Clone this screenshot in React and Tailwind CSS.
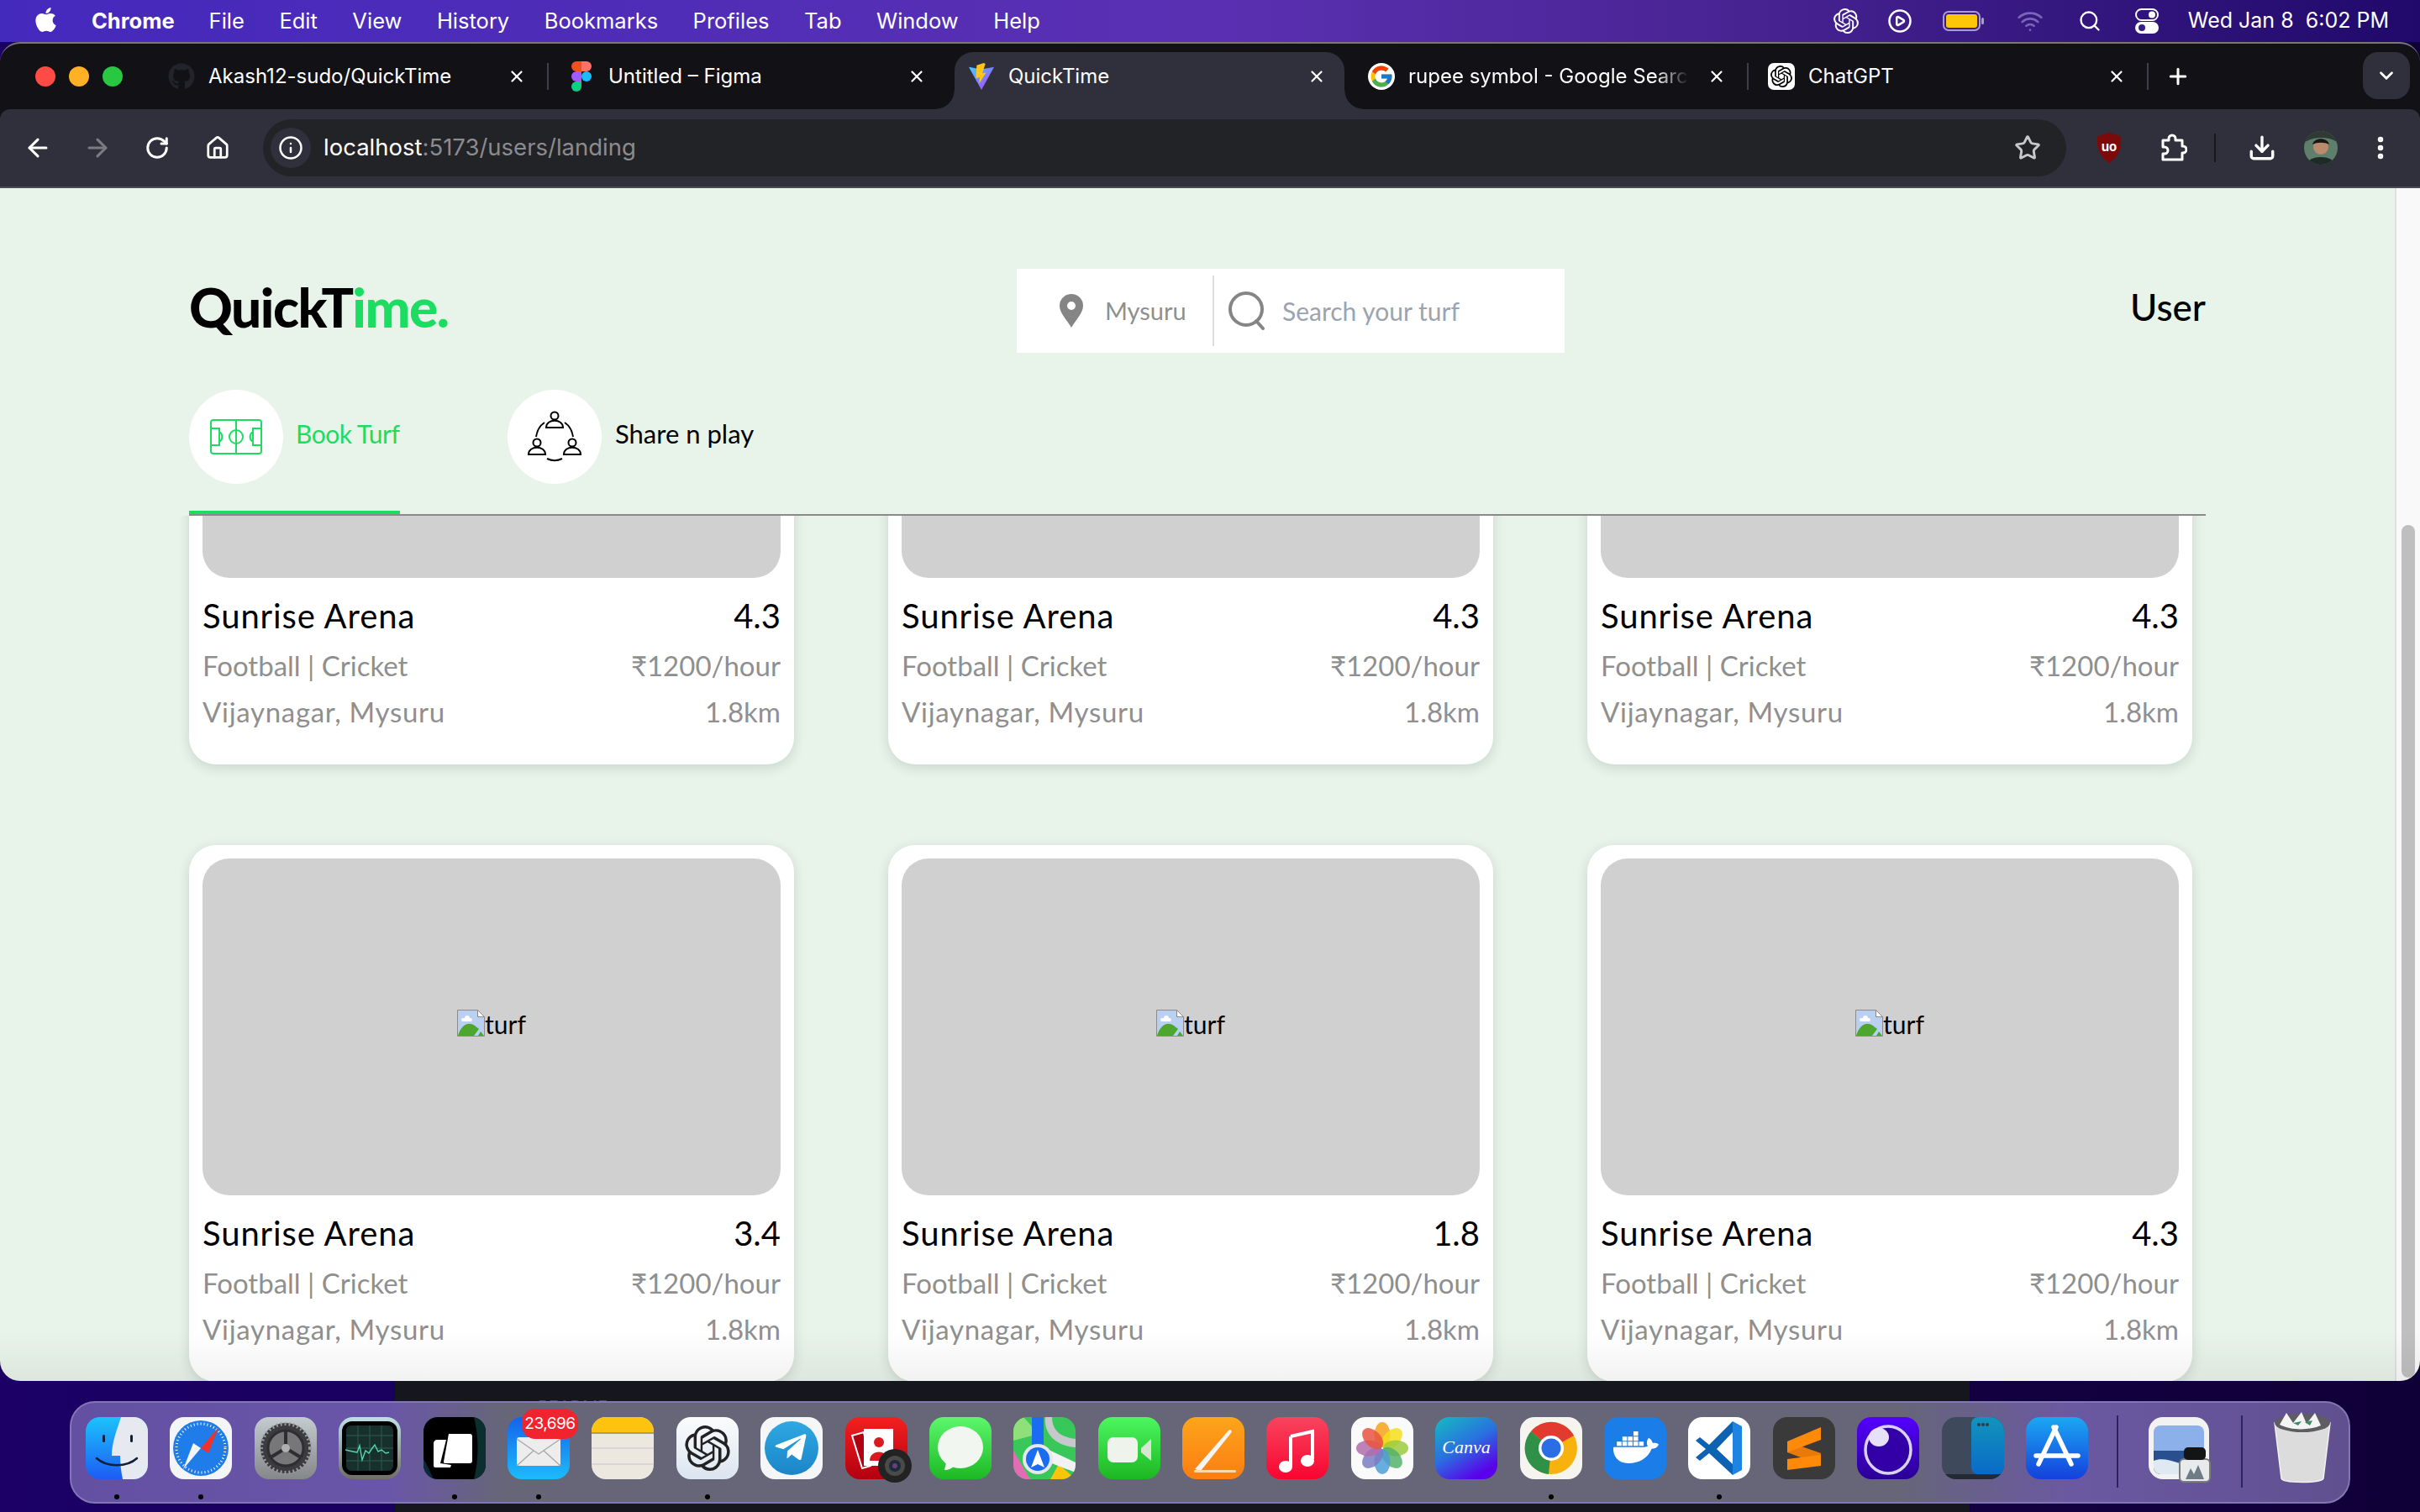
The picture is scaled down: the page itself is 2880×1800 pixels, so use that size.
import {
  ArrowLeft,
  ArrowRight,
  ChevronDown,
  CirclePlay,
  Download,
  EllipsisVertical,
  House,
  Info,
  Plus,
  RotateCw,
  Search,
  Star,
  Wifi,
  X,
} from "lucide-react";
import { FaApple, FaDocker, FaGithub, FaTelegramPlane } from "react-icons/fa";
import { FcGoogle } from "react-icons/fc";
import { SiOpenai } from "react-icons/si";

const MENU_ITEMS = ["File", "Edit", "View", "History", "Bookmarks", "Profiles", "Tab", "Window", "Help"];

const FigmaIcon = () => (
  <svg width="24" height="36" viewBox="0 0 24 36">
    <path d="M12 0H6a6 6 0 0 0 0 12h6z" fill="#f24e1e" />
    <path d="M12 0h6a6 6 0 0 1 0 12h-6z" fill="#ff7262" />
    <path d="M12 12H6a6 6 0 0 0 0 12h6z" fill="#a259ff" />
    <circle cx="18" cy="18" r="6" fill="#1abcfe" />
    <path d="M6 24h6v6a6 6 0 1 1-6-6z" fill="#0acf83" />
  </svg>
);

const ViteIcon = () => (
  <svg width="34" height="34" viewBox="0 0 34 34">
    <defs>
      <linearGradient id="viteBody" x1="0" y1="0" x2="1" y2="1">
        <stop offset="0" stopColor="#41d1ff" />
        <stop offset="1" stopColor="#bd34fe" />
      </linearGradient>
    </defs>
    <path d="M1 5l16 3 16-3-16 29z" fill="url(#viteBody)" />
    <path d="M20 0l-9 3-1 16 5-1-1 8 9-14-5 1 4-12z" fill="#ffc517" />
  </svg>
);

const ChatTabIcon = () => (
  <div className="w-[32px] h-[32px] rounded-[7px] bg-white flex items-center justify-center text-black">
    <SiOpenai size={26} />
  </div>
);

const TABS = [
  { id: 1, title: "Akash12-sudo/QuickTime", icon: <FaGithub size={32} className="text-[#22242a]" />, sep: true },
  { id: 2, title: "Untitled – Figma", icon: <FigmaIcon /> },
  { id: 3, title: "QuickTime", icon: <ViteIcon />, active: true },
  { id: 4, title: "rupee symbol - Google Search", icon: <FcGoogle size={32} className="bg-white rounded-full p-[1px]" />, sep: true, fade: true },
  { id: 5, title: "ChatGPT", icon: <ChatTabIcon />, sep: true },
];

const CARDS = ["4.3", "4.3", "4.3", "3.4", "1.8", "4.3"];

const MenuBar = () => (
  <div className="h-[50px] shrink-0 flex items-center pl-[38px] pr-[37px] text-white text-[25.5px] bg-[linear-gradient(90deg,#4429bd_0%,#5a30b2_50%,#4a2595_70%,#20096b_100%)]">
    <FaApple size={33} className="mr-[38px] -mt-[4px]" />
    <span className="font-bold mr-[41px]">Chrome</span>
    <div className="flex gap-[41.5px]">
      {MENU_ITEMS.map((item) => (
        <span key={item}>{item}</span>
      ))}
    </div>
    <div className="ml-auto flex items-center text-[25px]">
      <SiOpenai size={30} />
      <CirclePlay size={30} className="ml-[34px]" />
      <svg width="50" height="24" viewBox="0 0 50 24" className="ml-[36px]">
        <rect x="1" y="1" width="43" height="22" rx="6" fill="none" stroke="#a99bd8" strokeWidth="2" />
        <rect x="4" y="4" width="37" height="16" rx="3" fill="#fdc609" />
        <rect x="46" y="8" width="3" height="8" rx="1.5" fill="#a99bd8" />
      </svg>
      <Wifi size={32} className="ml-[38px] text-[#7a66b4]" />
      <Search size={28} className="ml-[41px]" />
      <svg width="28" height="30" viewBox="0 0 28 30" className="ml-[40px]">
        <rect x="1" y="1" width="26" height="13" rx="6.5" fill="none" stroke="#fff" strokeWidth="2" />
        <circle cx="20" cy="7.5" r="4" fill="#fff" />
        <rect x="0" y="16" width="28" height="14" rx="7" fill="#fff" />
        <circle cx="8" cy="23" r="4" fill="#3b1a8a" />
      </svg>
      <span className="ml-[35px] whitespace-pre">Wed Jan 8  6:02 PM</span>
    </div>
  </div>
);

const TabItem = ({ tab }) => (
  <div className="relative w-[476px] h-full flex items-center">
    {tab.active && (
      <>
        <div className="absolute left-0 top-[10px] bottom-0 w-[464px] bg-[#30303c] rounded-t-[22px]" />
        <div className="absolute left-[-22px] bottom-0 w-[22px] h-[22px] bg-[radial-gradient(circle_at_0_0,transparent_21px,#30303c_22px)]" />
        <div className="absolute left-[464px] bottom-0 w-[22px] h-[22px] bg-[radial-gradient(circle_at_100%_0,transparent_21px,#30303c_22px)]" />
      </>
    )}
    <div className="relative w-full flex items-center pl-[16px] pr-[34px] text-white text-[24px]">
      <div className="w-[32px] h-[36px] flex items-center justify-center shrink-0">{tab.icon}</div>
      <span
        className={
          tab.fade
            ? "ml-[16px] w-[334px] overflow-hidden whitespace-nowrap [mask-image:linear-gradient(90deg,#000_88%,transparent)]"
            : "ml-[16px] whitespace-nowrap"
        }
      >
        {tab.title}
      </span>
      <X size={22} strokeWidth={2.4} className="ml-auto" />
    </div>
    {tab.sep && <div className="absolute right-[7px] top-[23px] h-[32px] w-[2px] bg-[#3f3f4a]" />}
  </div>
);

const TabStrip = () => (
  <div className="h-[78px] flex items-center relative">
    <div className="w-[184px] h-full flex items-center pl-[42px] gap-[16px]">
      <span className="w-[24px] h-[24px] rounded-full bg-[#ff4b45]" />
      <span className="w-[24px] h-[24px] rounded-full bg-[#ffb024]" />
      <span className="w-[24px] h-[24px] rounded-full bg-[#28c840]" />
    </div>
    {TABS.map((tab) => (
      <TabItem key={tab.id} tab={tab} />
    ))}
    <Plus size={30} strokeWidth={2.4} className="text-white ml-[13px]" />
    <div className="ml-auto mr-[12px] -mt-[2px] w-[56px] h-[56px] rounded-[18px] bg-[#30303c] flex items-center justify-center">
      <ChevronDown size={26} strokeWidth={2.6} className="text-white" />
    </div>
  </div>
);

const Toolbar = () => (
  <div className="h-[94px] flex items-start pt-[12px] pl-[9px] bg-[#30303c] border-b-2 border-[#4a4a55] rounded-t-[12px] text-white">
    <div className="w-[71px] h-[68px] flex items-center justify-center">
      <ArrowLeft size={34} strokeWidth={2.2} />
    </div>
    <div className="w-[71px] h-[68px] flex items-center justify-center text-[#7b7b84]">
      <ArrowRight size={34} strokeWidth={2.2} />
    </div>
    <div className="w-[72px] h-[68px] flex items-center justify-center">
      <RotateCw size={30} strokeWidth={2.4} />
    </div>
    <div className="w-[72px] h-[68px] flex items-center justify-center">
      <House size={30} strokeWidth={2.2} />
    </div>
    <div className="ml-[18px] w-[2146px] h-[68px] rounded-full bg-[#222327] flex items-center pl-[9px] pr-[30px]">
      <div className="w-[48px] h-[48px] rounded-full bg-[#30303c] flex items-center justify-center">
        <Info size={30} strokeWidth={2} />
      </div>
      <span className="ml-[15px] text-[27.5px]">
        localhost<span className="text-[#8b8b90]">:5173/users/landing</span>
      </span>
      <Star size={32} strokeWidth={2.2} className="ml-auto text-[#c8c8cc]" />
    </div>
    <div className="h-[68px] flex items-center">
      <svg width="32" height="36" viewBox="0 0 32 36" className="ml-[35px]">
        <path d="M16 0l14 4c1 12-1 24-14 32C3 28 1 16 2 4z" fill="#7c0a0a" />
        <text x="16" y="22" textAnchor="middle" fontSize="15" fontWeight="700" fill="#fff" fontFamily="Inter, sans-serif">uo</text>
      </svg>
      <svg width="34" height="34" viewBox="0 0 34 34" fill="none" stroke="#fff" strokeWidth="3" strokeLinejoin="round" className="ml-[43px]">
        <path d="M5 8h7V6a4 4 0 0 1 8 0v2h8v7h1a4 4 0 0 1 0 8h-1v8H5v-7h2a4 4 0 0 0 0-8H5z" />
      </svg>
      <div className="ml-[32px] w-[2px] h-[34px] bg-[#17171c]" />
      <Download size={34} strokeWidth={2.4} className="ml-[38px]" />
      <svg width="40" height="40" viewBox="0 0 40 40" className="ml-[33px] rounded-full">
        <rect width="40" height="40" fill="#5f7f6d" />
        <path d="M0 0h40v14c-8-8-30-8-40 0z" fill="#2e3a33" />
        <circle cx="20" cy="19" r="9" fill="#b98a6c" />
        <path d="M10 16c2-9 18-9 20 0-6-3-14-3-20 0z" fill="#1c1612" />
        <path d="M3 40c2-12 32-12 34 0z" fill="#1d2a26" />
      </svg>
      <EllipsisVertical size={34} strokeWidth={2.6} className="ml-[34px]" />
    </div>
  </div>
);

const Logo = () => (
  <div className="w-[985px] -mt-[8px] text-[64px] leading-none font-black tracking-[-1.5px] text-black">
    QuickT<span className="text-[#1cdc62]">ime.</span>
  </div>
);

const SearchBox = () => (
  <div className="w-[652px] h-[100px] bg-white flex items-center text-[30px]">
    <svg width="28" height="40" viewBox="0 0 28 40" className="ml-[51px]">
      <path fillRule="evenodd" d="M14 0a14 14 0 0 1 14 14c0 9-9 17-14 26C9 31 0 23 0 14A14 14 0 0 1 14 0zm0 9a5 5 0 1 0 0 10 5 5 0 0 0 0-10z" fill="#858585" />
    </svg>
    <span className="ml-[26px] w-[128px] text-[29px] text-[#8f8f8f]">Mysuru</span>
    <div className="w-[2px] h-[84px] bg-[#dedede]" />
    <svg width="46" height="46" viewBox="0 0 46 46" className="ml-[17px]">
      <circle cx="21" cy="21" r="19" fill="none" stroke="#858585" strokeWidth="4" />
      <path d="M33 35l8 9" stroke="#858585" strokeWidth="4" strokeLinecap="round" />
    </svg>
    <span className="ml-[18px] text-[#9ca3af]">Search your turf</span>
  </div>
);

const TurfIcon = () => (
  <svg width="62" height="42" viewBox="0 0 62 42" fill="none" stroke="#1cdc62" strokeWidth="2">
    <rect x="1" y="1" width="60" height="40" rx="3" />
    <path d="M31 1v40" />
    <circle cx="31" cy="21" r="8" />
    <path d="M1 11h10v20H1M61 11H51v20h10M11 15a7 7 0 0 1 0 12M51 15a7 7 0 0 0 0 12" />
  </svg>
);

const ShareIcon = () => (
  <svg width="66" height="62" viewBox="0 0 66 62" fill="none" stroke="#000" strokeWidth="2">
    <circle cx="33" cy="6" r="4.5" />
    <path d="M23 20c0-11 20-11 20 0zM2 52c0-11 20-11 20 0zM44 52c0-11 20-11 20 0z" />
    <circle cx="12" cy="38" r="4.5" />
    <circle cx="54" cy="38" r="4.5" />
    <path d="M21 14c-6 4-9 10-10 17M45 14c6 4 9 10 10 17M24 57c6 3 12 3 18 0" />
  </svg>
);

const NavTabs = () => (
  <div className="flex gap-[128px] mt-[44px]">
    <div className="w-[251px] h-[148px] flex items-start border-b-4 border-[#1cdc62] text-[#1cdc62]">
      <div className="w-[112px] h-[112px] shrink-0 rounded-full bg-white flex items-center justify-center">
        <TurfIcon />
      </div>
      <span className="ml-[15px] mt-[31px] text-[30px] tracking-[-0.5px] leading-[42px] whitespace-nowrap">Book Turf</span>
    </div>
    <div className="h-[148px] flex items-start text-black">
      <div className="w-[112px] h-[112px] shrink-0 rounded-full bg-white flex items-center justify-center">
        <ShareIcon />
      </div>
      <span className="ml-[16px] mt-[31px] text-[31px] leading-[42px] whitespace-nowrap">Share n play</span>
    </div>
  </div>
);

const BrokenImage = () => (
  <svg width="33" height="32" viewBox="0 0 33 32" className="shrink-0">
    <path d="M.5.5h24l8 8v23H.5z" fill="#b9d0f2" stroke="#8c8c8c" />
    <path d="M24.5.5v8h8z" fill="#fff" stroke="#8c8c8c" />
    <path d="M9 10a3 3 0 0 1 6 0h1a2 2 0 0 1 0 4H7a2 2 0 0 1 0-4z" fill="#fff" />
    <path d="M1 31c3-12 12-18 20-12l5 4-6 8z" fill="#4ea62f" />
    <path d="M25 31l3-5 4 5z" fill="#4ea62f" />
  </svg>
);

const TurfCard = ({ rating }) => (
  <div className="h-[639px] bg-white rounded-[32px] p-[16px] shadow-[0_4px_14px_rgba(40,70,50,0.16)]">
    <div className="h-[401px] bg-[#d0d0d0] rounded-[32px] flex items-center justify-center pb-[10px]">
      <BrokenImage />
      <span className="text-[30px] leading-[40px] text-black mt-[2px]">turf</span>
    </div>
    <div className="flex justify-between mt-[20px] text-[40px] leading-[50px] text-black">
      <span className="tracking-[0.9px]">Sunrise Arena</span>
      <span>{rating}</span>
    </div>
    <div className="flex justify-between items-center mt-[8px] h-[54px] text-[33px] text-[#8f8f8f]">
      <span>Football | Cricket</span>
      <span>₹1200/hour</span>
    </div>
    <div className="flex justify-between items-center h-[56px] text-[33px] text-[#8f8f8f]">
      <span className="tracking-[0.7px]">Vijaynagar, Mysuru</span>
      <span>1.8km</span>
    </div>
  </div>
);

const PageContent = () => (
  <div className="flex-1 min-w-0 h-full flex flex-col bg-[#e8f3ea] [font-family:Lato,sans-serif]">
    <div className="px-[225px] pt-[96px] shrink-0 relative z-10">
      <div className="flex items-center h-[100px]">
        <Logo />
        <SearchBox />
        <span className="ml-auto text-[44px] font-medium text-black -mt-[10px]">User</span>
      </div>
      <div className="border-b-2 border-[#8a8a8a]">
        <NavTabs />
      </div>
    </div>
    <div className="flex-1 min-h-0 overflow-hidden px-[225px]">
      <div className="-mt-[343px] grid grid-cols-[720px_720px_720px] gap-x-[112px] gap-y-[96px]">
        {CARDS.map((rating, i) => (
          <TurfCard key={i} rating={rating} />
        ))}
      </div>
    </div>
  </div>
);

const Scrollbar = () => (
  <div className="w-[30px] h-full bg-[#f9f9f9] border-l-2 border-[#e0e0e0] pt-[401px] pl-[6px] pb-[4px]">
    <div className="w-[16px] h-full rounded-full bg-[#bfbfbf]" />
  </div>
);

const BrowserWindow = () => (
  <div className="relative h-[1594px] shrink-0 rounded-[24px] overflow-hidden bg-[#111116] border-t-2 border-[#77777c] flex flex-col z-10">
    <TabStrip />
    <Toolbar />
    <div className="relative flex-1 min-h-0 flex">
      <PageContent />
      <Scrollbar />
      <div className="absolute left-0 right-0 bottom-0 h-[60px] bg-[linear-gradient(180deg,transparent,rgba(0,0,0,0.05))]" />
    </div>
  </div>
);

const T = ({ children, fill, id }) => (
  <svg width="74" height="74" viewBox="0 0 74 74" className="block overflow-visible">
    <defs>
      <clipPath id={`clip-${id}`}>
        <rect width="74" height="74" rx="17" />
      </clipPath>
    </defs>
    <g clipPath={`url(#clip-${id})`}>
      <rect width="74" height="74" fill={fill} />
      {children}
    </g>
  </svg>
);

const Grad = ({ id, from, to }) => (
  <linearGradient id={id} x1="0" y1="0" x2="0" y2="1">
    <stop offset="0" stopColor={from} />
    <stop offset="1" stopColor={to} />
  </linearGradient>
);

const DOCK_ICONS = [
  {
    id: "finder",
    dot: true,
    icon: (
      <T id="finder" fill="url(#g-finder)">
        <defs>
          <Grad id="g-finder" from="#1cc3fb" to="#1c5cf5" />
        </defs>
        <path d="M42 0h32v74H44c-2-10-3-18-3-28H31c0-16 6-30 11-46z" fill="#e6e9f0" />
        <rect x="20" y="21" width="3" height="9" rx="1.5" fill="#10203a" />
        <rect x="53" y="21" width="3" height="9" rx="1.5" fill="#10203a" />
        <path d="M13 49c12 11 36 11 48 0" fill="none" stroke="#10203a" strokeWidth="2.5" strokeLinecap="round" />
      </T>
    ),
  },
  {
    id: "safari",
    dot: true,
    icon: (
      <T id="safari" fill="#f4f5f7">
        <circle cx="37" cy="37" r="33" fill="#1f7ce8" />
        <circle cx="37" cy="37" r="29" fill="none" stroke="#fff" strokeWidth="3" strokeDasharray="1 3" />
        <path d="M37 37l21-25-12 31z" fill="#f0322c" />
        <path d="M37 37L16 62l12-31z" fill="#f4f5f7" />
      </T>
    ),
  },
  {
    id: "settings",
    icon: (
      <T id="settings" fill="url(#g-settings)">
        <defs>
          <Grad id="g-settings" from="#c4ccd0" to="#85878a" />
        </defs>
        <circle cx="37" cy="37" r="30" fill="#3c3c40" />
        <circle cx="37" cy="37" r="29" fill="none" stroke="#9a9a9c" strokeWidth="4" strokeDasharray="2 3" />
        <circle cx="37" cy="37" r="21" fill="#77777a" stroke="#2e2e32" strokeWidth="3" />
        <path d="M37 37V16M37 37L19 48M37 37l18 11" stroke="#2e2e32" strokeWidth="4" />
        <circle cx="37" cy="37" r="5" fill="#b0b0b2" />
      </T>
    ),
  },
  {
    id: "activity",
    icon: (
      <T id="activity" fill="url(#g-activity)">
        <defs>
          <Grad id="g-activity" from="#bfe1e4" to="#6e6e66" />
        </defs>
        <rect x="4" y="5" width="66" height="64" rx="12" fill="#000" />
        <rect x="9" y="10" width="56" height="54" rx="6" fill="#17302c" />
        <path d="M9 22h56M9 37h56M9 52h56M23 10v54M37 10v54M51 10v54" stroke="#2e5a50" strokeWidth="1" />
        <path d="M8 39c5 1 8 2 14 3l3-8 3 17 4-11 4 3 4-6 3-4 4 8 4-2 5 4 4-1" fill="none" stroke="#54d6ac" strokeWidth="1.4" />
      </T>
    ),
  },
  {
    id: "cursor",
    dot: true,
    icon: (
      <T id="cursor" fill="#000">
        <path d="M60 0h14v74H60c6-24 6-50 0-74z" fill="#0c2e2c" />
        <path d="M0 50c5 8 8 16 12 24H0z" fill="#0c2a3c" />
        <path d="M30 20h25c2 0 3 1 3 3v29c0 2-1 3-3 3H26c-2 0-2-1-2-2z" fill="#fff" />
        <path d="M16 27h11l-7 28 13 2-1 3H14c-1 0-2-1-2-2V31c0-2 2-4 4-4z" fill="#fff" />
      </T>
    ),
  },
  {
    id: "mail",
    dot: true,
    badge: "23,696",
    icon: (
      <T id="mail" fill="url(#g-mail)">
        <defs>
          <Grad id="g-mail" from="#1562ea" to="#1cbcfc" />
        </defs>
        <rect x="11" y="24" width="52" height="34" rx="3" fill="#ededed" />
        <path d="M11 26l26 18 26-18M11 58l20-18M63 58L43 40" fill="none" stroke="#a8a8a8" strokeWidth="1.4" />
      </T>
    ),
  },
  {
    id: "notes",
    icon: (
      <T id="notes" fill="#ece8e0">
        <rect width="74" height="18" fill="#fdc30f" />
        <rect y="18" width="74" height="2" fill="#a59c7a" />
        <path d="M0 37h74M0 56h74" stroke="#d3d0d3" strokeWidth="1.6" />
      </T>
    ),
  },
  {
    id: "chatgpt",
    dot: true,
    icon: (
      <T id="chatgpt" fill="url(#g-chatgpt)">
        <defs>
          <Grad id="g-chatgpt" from="#fbfcfd" to="#dbe5f0" />
        </defs>
        <SiOpenai x={10} y={10} size={54} color="#222" />
      </T>
    ),
  },
  {
    id: "telegram",
    icon: (
      <T id="telegram" fill="#f5f6f7">
        <circle cx="37" cy="37" r="32" fill="url(#g-telegram)" />
        <defs>
          <Grad id="g-telegram" from="#2fa8e2" to="#1b85c8" />
        </defs>
        <FaTelegramPlane x={15} y={15} size={42} color="#fff" />
      </T>
    ),
  },
  {
    id: "photobooth",
    icon: (
      <>
        <T id="photobooth" fill="url(#g-booth)">
          <defs>
            <Grad id="g-booth" from="#f4201f" to="#b30010" />
          </defs>
          <path d="M8 22l14-4 8 40-10 3z" fill="#b30010" stroke="#fff" strokeWidth="2" />
          <rect x="22" y="14" width="35" height="44" fill="#fff" />
          <circle cx="40" cy="30" r="6" fill="#d81b20" />
          <path d="M29 52c0-14 22-14 22 0z" fill="#d81b20" />
        </T>
        <svg width="42" height="42" viewBox="0 0 42 42" className="absolute left-[38px] top-[37px]">
          <circle cx="21" cy="21" r="20" fill="#232323" />
          <circle cx="21" cy="21" r="12" fill="#4a4a4a" />
          <circle cx="21" cy="21" r="7" fill="#1b2b3a" />
          <circle cx="21" cy="21" r="3" fill="#6b3f7a" />
        </svg>
      </>
    ),
  },
  {
    id: "messages",
    icon: (
      <T id="messages" fill="url(#g-msg)">
        <defs>
          <Grad id="g-msg" from="#5cf76c" to="#1cb924" />
        </defs>
        <ellipse cx="37" cy="36" rx="27" ry="25" fill="#f2f6f1" />
        <path d="M20 54l-2 9c5 0 9-2 12-5z" fill="#f2f6f1" />
      </T>
    ),
  },
  {
    id: "maps",
    icon: (
      <T id="maps" fill="#38c85a">
        <path d="M0 0h12l18 20L0 28z" fill="#8fe07a" />
        <path d="M0 40l20 34H0z" fill="#e46cb4" />
        <path d="M44 74l10-18 20 18z" fill="#fcc30d" />
        <rect x="22" y="0" width="14" height="42" fill="#1a6cf0" />
        <path d="M46 0c0 16 10 24 28 26v10C48 34 36 18 38 0z" fill="#c6c8cc" />
        <path d="M38 52l36 14v-12L40 38z" fill="#f2f2f2" />
        <circle cx="29" cy="50" r="18" fill="#e6e8ee" />
        <circle cx="29" cy="50" r="14" fill="#1a6cf0" />
        <path d="M29 39l8 21-8-4-8 4z" fill="#fff" />
      </T>
    ),
  },
  {
    id: "facetime",
    icon: (
      <T id="facetime" fill="url(#g-face)">
        <defs>
          <Grad id="g-face" from="#4cf75f" to="#1cb722" />
        </defs>
        <rect x="11" y="24" width="36" height="30" rx="7" fill="#eef3ec" />
        <path d="M51 37l12-11v26L51 42z" fill="#d7e6d3" />
      </T>
    ),
  },
  {
    id: "pages",
    icon: (
      <T id="pages" fill="url(#g-pages)">
        <defs>
          <Grad id="g-pages" from="#fda51a" to="#fb7d12" />
        </defs>
        <path d="M15 62L55 16c2-2 5 0 3 3L22 64z" fill="#f4f4f4" />
        <rect x="14" y="63" width="50" height="3" rx="1.5" fill="#ffd9a8" />
      </T>
    ),
  },
  {
    id: "music",
    icon: (
      <T id="music" fill="url(#g-music)">
        <defs>
          <Grad id="g-music" from="#f9445e" to="#f80530" />
        </defs>
        <path d="M29 23l26-6v33" fill="none" stroke="#fff" strokeWidth="4" />
        <path d="M29 23v35" stroke="#fff" strokeWidth="4" />
        <ellipse cx="23" cy="59" rx="8" ry="7" fill="#fff" />
        <ellipse cx="49" cy="52" rx="8" ry="7" fill="#fff" />
      </T>
    ),
  },
  {
    id: "photos",
    icon: (
      <T id="photos" fill="#fafafa">
        {[
          ["#f7a11a", 0],
          ["#f4de1c", 45],
          ["#9cca3c", 90],
          ["#53b36a", 135],
          ["#4f9ed8", 180],
          ["#7a7bc2", 225],
          ["#b26cac", 270],
          ["#e8553f", 315],
        ].map(([color, angle]) => (
          <ellipse key={angle} cx="37" cy="21" rx="9.5" ry="15" fill={color} opacity="0.85" transform={`rotate(${angle} 37 37)`} />
        ))}
      </T>
    ),
  },
  {
    id: "canva",
    icon: (
      <T id="canva" fill="url(#g-canva)">
        <defs>
          <linearGradient id="g-canva" x1="0" y1="0" x2="0.6" y2="1">
            <stop offset="0" stopColor="#14bcc0" />
            <stop offset="0.55" stopColor="#2a6fe0" />
            <stop offset="1" stopColor="#5a00ea" />
          </linearGradient>
        </defs>
        <text x="37" y="43" textAnchor="middle" fontSize="22" fontStyle="italic" fill="#fff" fontFamily="Liberation Serif, serif">
          Canva
        </text>
      </T>
    ),
  },
  {
    id: "chrome",
    dot: true,
    icon: (
      <T id="chrome" fill="#f6f4ee">
        <circle cx="37" cy="37" r="31" fill="#f8b20e" />
        <path d="M37 37L13 17a31 31 0 0 1 51 5z" fill="#e23a2e" />
        <path d="M37 37L13 17a31 31 0 0 0 21 51z" fill="#2f9147" />
        <circle cx="37" cy="37" r="15" fill="#fff" />
        <circle cx="37" cy="37" r="11.5" fill="#2a6de4" />
      </T>
    ),
  },
  {
    id: "docker",
    icon: (
      <T id="docker" fill="#1b7ee8">
        <FaDocker x={11} y={9} size={54} color="#fff" />
      </T>
    ),
  },
  {
    id: "vscode",
    dot: true,
    icon: (
      <T id="vscode" fill="#fff">
        <path d="M53 5l11 6v52l-11 6z" fill="#1d84e4" />
        <path d="M53 5L25 33l-11-9-5 4 12 10-12 10 5 4 11-9 28 26 0-13-19-18 19-20z" fill="#0d62b2" />
      </T>
    ),
  },
  {
    id: "sublime",
    icon: (
      <T id="sublime" fill="#3a3a3a">
        <path d="M17 29l40 14v14L17 42z" fill="#e97a08" />
        <path d="M57 12L17 29v13l40-15z" fill="#ff8a0a" />
        <path d="M57 45v13L17 63V50z" fill="#ff8a0a" />
      </T>
    ),
  },
  {
    id: "eye",
    icon: (
      <T id="eye" fill="url(#g-eye)">
        <defs>
          <Grad id="g-eye" from="#5400ff" to="#2a0094" />
        </defs>
        <ellipse cx="37" cy="39" rx="27" ry="28" fill="#3300a8" stroke="#d8d2f0" strokeWidth="3.5" />
        <ellipse cx="26" cy="24" rx="12" ry="11" fill="#e6e0f8" />
      </T>
    ),
  },
  {
    id: "sidebar",
    icon: (
      <T id="sidebar" fill="#3e4a5c">
        <rect y="68" width="74" height="6" fill="#232a34" />
        <rect x="35" y="0" width="39" height="68" rx="8" fill="url(#g-side)" />
        <defs>
          <Grad id="g-side" from="#1294bc" to="#0a6ac8" />
        </defs>
        <circle cx="44" cy="9" r="2" fill="#333c4a" />
        <circle cx="49" cy="9" r="2" fill="#333c4a" />
        <circle cx="54" cy="9" r="2" fill="#333c4a" />
      </T>
    ),
  },
  {
    id: "appstore",
    icon: (
      <T id="appstore" fill="url(#g-store)">
        <defs>
          <Grad id="g-store" from="#1aa8f2" to="#1440dc" />
        </defs>
        <path d="M36 12L15 56M33 12l21 44M12 46h50" stroke="#fff" strokeWidth="5.5" strokeLinecap="round" />
      </T>
    ),
  },
];

const PreviewIcon = () => (
  <div className="relative w-[74px] h-[74px]">
    <svg width="74" height="74" viewBox="0 0 74 74" className="block">
      <rect width="72" height="74" rx="17" fill="#f2f2f2" />
      <rect x="6" y="10" width="60" height="58" rx="8" fill="#8bb0ea" />
      <path d="M6 40h60v20c0 4-4 8-8 8H14c-4 0-8-4-8-8z" fill="#2a4f8f" />
      <path d="M6 52c14-6 30 4 60 12v4H14c-4 0-8-4-8-8z" fill="#dfe9f2" />
    </svg>
    <svg width="42" height="42" viewBox="0 0 42 42" className="absolute left-[34px] top-[36px]">
      <rect x="3" y="14" width="36" height="27" rx="5" fill="#e8eaec" stroke="#7c7c7c" strokeWidth="2" />
      <path d="M10 38l6-13 4 7 5-11 7 17z" fill="#6f7c85" />
      <rect x="8" y="0" width="26" height="15" rx="5" fill="#141414" />
    </svg>
  </div>
);

const TrashIcon = () => (
  <svg width="70" height="86" viewBox="0 0 70 86" className="block">
    <path d="M2 14l8 66c1 6 48 6 50 0l8-66z" fill="#dcdcdc" />
    <path d="M2 14l8 66c1 6 48 6 50 0l8-66z" fill="none" stroke="#f2f2f2" strokeWidth="1.5" />
    <ellipse cx="35" cy="14" rx="33" ry="11" fill="#5e5e62" />
    <path d="M8 16l8-14 8 12 10-13 6 14 10-13 7 15c-14 6-36 6-49-1z" fill="#f4f4f4" />
    <path d="M24 14l6 3 4-5zM38 13l6 4 3-6z" fill="#3a8e64" />
  </svg>
);

const DockItem = ({ item }) => (
  <div className="relative w-[74px] h-[74px] shrink-0">
    {item.icon}
    {item.badge && (
      <div className="absolute left-[17px] top-[-10px] w-[67px] h-[36px] rounded-[16px] bg-[#f0232f] flex items-center justify-center text-white text-[19px] tracking-[-0.5px]">
        {item.badge}
      </div>
    )}
    {item.dot && <div className="absolute left-[34px] top-[92px] w-[6px] h-[6px] rounded-full bg-black" />}
  </div>
);

const Dock = () => (
  <div className="relative mx-[83px] mt-[24px] w-[2714px] h-[122px] rounded-[30px] border-2 border-[#8276b4] flex items-start pt-[17px] pl-[17px] bg-[linear-gradient(90deg,#6350a2_0%,#6a56a8_14%,#666678_19%,#666678_80%,#6a58a2_88%,#60508f_100%)]">
    <div className="flex gap-[26.4px]">
      {DOCK_ICONS.map((item) => (
        <DockItem key={item.id} item={item} />
      ))}
    </div>
    <div className="w-[2px] h-[86px] bg-[#2c2360] ml-[34px] -mt-[2px] shrink-0" />
    <div className="ml-[36px] shrink-0">
      <PreviewIcon />
    </div>
    <div className="w-[2px] h-[86px] bg-[#2c2360] ml-[36px] -mt-[2px] shrink-0" />
    <div className="ml-[36px] -mt-[7px] shrink-0">
      <TrashIcon />
    </div>
  </div>
);

const Desktop = () => (
  <div className="relative flex-1 min-h-0">
    <div className="absolute left-[470px] top-0 bottom-0 w-[1874px] bg-[#16161f]" />
    <span className="absolute left-[640px] top-[16px] text-[20px] text-[#45506a] [font-family:Inter,sans-serif]">README</span>
    <Dock />
  </div>
);

export default function App() {
  return (
    <div className="w-full h-screen overflow-hidden flex flex-col bg-[linear-gradient(90deg,#1c0066,#100038)] [font-family:Inter,sans-serif]">
      <MenuBar />
      <BrowserWindow />
      <Desktop />
    </div>
  );
}
